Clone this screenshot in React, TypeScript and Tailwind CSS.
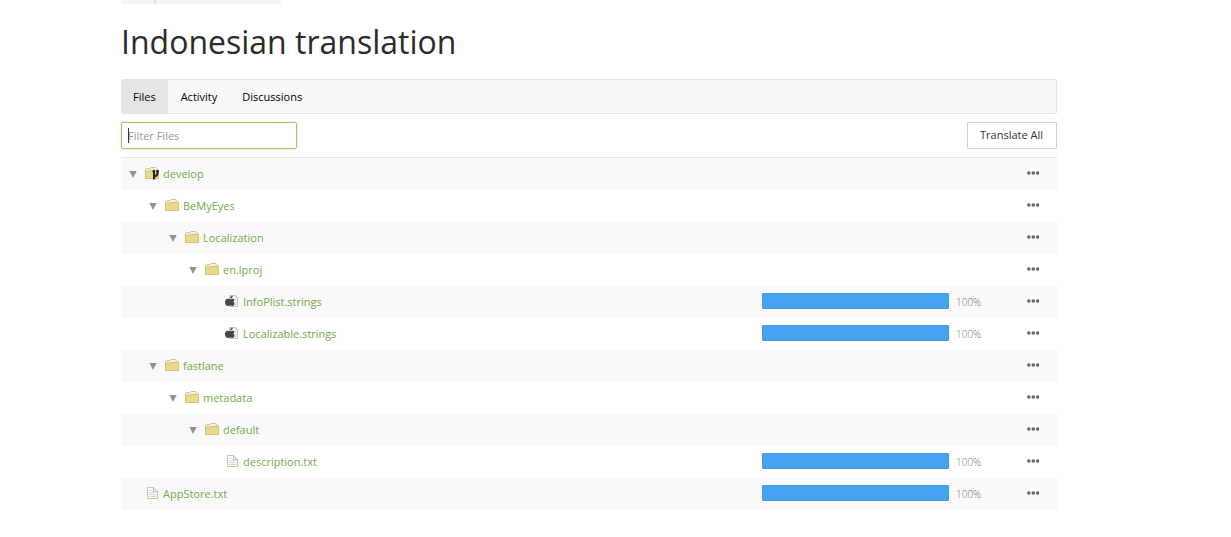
type IconKind = "branch" | "folder" | "apple" | "text";

interface FileRow {
  name: string;
  depth: number;
  icon: IconKind;
  progress?: number;
}

const rows: FileRow[] = [
  { name: "develop", depth: 0, icon: "branch" },
  { name: "BeMyEyes", depth: 1, icon: "folder" },
  { name: "Localization", depth: 2, icon: "folder" },
  { name: "en.lproj", depth: 3, icon: "folder" },
  { name: "InfoPlist.strings", depth: 4, icon: "apple", progress: 100 },
  { name: "Localizable.strings", depth: 4, icon: "apple", progress: 100 },
  { name: "fastlane", depth: 1, icon: "folder" },
  { name: "metadata", depth: 2, icon: "folder" },
  { name: "default", depth: 3, icon: "folder" },
  { name: "description.txt", depth: 4, icon: "text", progress: 100 },
  { name: "AppStore.txt", depth: 0, icon: "text", progress: 100 },
];

function FolderIcon({ branch = false }: { branch?: boolean }) {
  return (
    <svg width="16" height="14" viewBox="0 0 16 14" aria-hidden="true">
      <path d="M1.5 11.5V2.500l1-1H6l1-1H12l1 1V3h1.500v8.500z" fill="#f4f0d6" stroke="#cdc29a" />
      <path d="M1.500 5q0-1 1-1H7l1-.5h5.500q1 0 1 1L14.200 10.500q0 1-1 1H2.500q-1 0-1-1z" fill="#e8dc8c" stroke="#d6c378" />
      {branch && (
        <g fill="none" stroke="#26231d" strokeWidth="2">
          <path d="M10 3v9.500" />
          <path d="M13.500 3v3q0 3-3.500 3.500" />
          <path d="M8.500 4.500H11M12 4.500h3" strokeWidth="1.500" />
        </g>
      )}
    </svg>
  );
}

function PageIcon({ apple = false }: { apple?: boolean }) {
  return (
    <svg width="16" height="14" viewBox="0 0 16 14" aria-hidden="true">
      {apple ? (
        <>
          <path d="M5.500.5h6l2 2v9h-8z" fill="#fbfbfb" stroke="#bfc2c4" />
          <path d="M11.500.5v2.500h2M11 5.500h1.500M10.500 7.500h2M11 9.500h1.500" fill="none" stroke="#cdd0d1" />
          <path
            d="M6 3.600C6 1.900 7.100 1 8.700.8 8.800 2.500 7.600 3.500 6 3.600zM6 4.200C7 4.200 7.600 3.600 8.800 3.700 9.600 3.800 10.300 4.100 10.700 4.700 9.100 5.800 9.300 7.900 10.900 8.600 10.300 10.100 9.500 11 8.500 11 7.600 11 7.300 10.500 6.200 10.500 5.100 10.500 4.800 11 3.900 11 2.200 11 1 9 1 7 1 4.900 2.300 3.700 3.800 3.700 4.700 3.700 5.300 4.200 6 4.200z"
            fill="#454545"
          />
        </>
      ) : (
        <>
          <path d="M3.500.5h6l4 4v7h-10z" fill="#fbfbfb" stroke="#c2c4c2" />
          <path d="M9.500.5v4h4" fill="none" stroke="#c2c4c2" />
          <path d="M5 3.500h4M5 5.500h7M5 7.500h7M5 9.500h7" stroke="#d8dad8" />
          <path d="M13.500 5v6.500H12" fill="none" stroke="#b9cc7c" />
        </>
      )}
    </svg>
  );
}

function RowIcon({ kind }: { kind: IconKind }) {
  if (kind === "apple") return <PageIcon apple />;
  if (kind === "text") return <PageIcon />;
  return <FolderIcon branch={kind === "branch"} />;
}

// Each nesting level shifts the row by 20px
function Row({ row }: { row: FileRow }) {
  const isFolder = row.icon === "branch" || row.icon === "folder";

  return (
    <tr className="h-8 odd:bg-[#f9f9f9]">
      <td className="p-0">
        <div className="flex items-center pl-2" style={{ marginLeft: row.depth * 20 }}>
          <span className="flex w-[15px] shrink-0">
            {isFolder && (
              <button type="button" aria-label={`Collapse ${row.name}`}>
                <svg width="8" height="8" viewBox="0 0 8 8">
                  <path d="M.3 1h7.400L4 8z" fill="#929292" />
                </svg>
              </button>
            )}
          </span>
          <a href="#" className="flex items-center gap-[3px] text-[#76a74c]">
            <RowIcon kind={row.icon} />
            <span>{row.name}</span>
          </a>
        </div>
      </td>
      <td className="p-0">
        {row.progress !== undefined && (
          <div className="mb-0.5 h-4">
            <div
              className="h-4 rounded-[1px] border border-[#4499e4] bg-[#48a2f2]"
              style={{ width: `${row.progress}%` }}
            />
          </div>
        )}
      </td>
      <td className="p-0 pl-[7px] text-[10px] font-light text-[#777]">
        {row.progress !== undefined && `${row.progress}%`}
      </td>
      <td className="p-0">
        <button type="button" aria-label={`Actions for ${row.name}`} className="mb-0.5 ml-3 flex h-4 items-center">
          <svg width="12" height="4" viewBox="0 0 12 4" fill="#666">
            <circle cx="1.800" cy="2" r="1.800" />
            <circle cx="6.300" cy="2" r="1.800" />
            <circle cx="10.700" cy="2" r="1.800" />
          </svg>
        </button>
      </td>
    </tr>
  );
}

export default function App() {
  return (
    <main className="bg-white pr-[174px] pl-[121px] font-['Open_Sans',sans-serif] text-[11px] leading-4 text-[#333]">
      <div className="h-1 w-40 bg-[#f5f5f5]">
        <svg width="40" height="4" viewBox="0 0 40 4" aria-hidden="true">
          <path d="M35 0l-2 4" stroke="#ccc" />
        </svg>
      </div>

      <h1 className="mt-4 text-[32px] leading-11 font-medium text-[#2b2b2b]">Indonesian translation</h1>

      <nav className="mt-[15px] flex h-[35px] overflow-hidden rounded-xs border border-[#e5e5e5] bg-[#f8f8f8] text-black">
        <a href="#" aria-current="page" className="flex items-center bg-[#e5e5e5] pr-3 pl-[11px]">
          Files
        </a>
        <a href="#" className="flex items-center px-[13px]">
          Activity
        </a>
        <a href="#" className="flex items-center px-3">
          Discussions
        </a>
      </nav>

      <div className="my-2 flex items-center justify-between">
        <div className="relative">
          <input
            type="text"
            aria-label="Filter Files"
            placeholder="Filter Files"
            className="block h-[27px] w-44 rounded-xs border border-[#9ccb69] px-1.5 shadow-[0_0_2px_#b5dc8c] outline-none placeholder:text-[#999]"
          />
          <span className="absolute top-1.5 left-[7px] h-[15px] w-px bg-[#333]" />
        </div>
        <button type="button" className="h-[27px] rounded-[1px] border border-[#d3d3d3] bg-white pr-[13px] pb-0.5 pl-3">
          Translate All
        </button>
      </div>

      <table className="w-full table-fixed border-separate border-spacing-0 border-t border-[#e5e5e5]">
        <colgroup>
          <col />
          <col className="w-[187px]" />
          <col className="w-[66px]" />
          <col className="w-[42px]" />
        </colgroup>
        <tbody>
          {rows.map((row) => (
            <Row key={row.name} row={row} />
          ))}
        </tbody>
      </table>
    </main>
  );
}
